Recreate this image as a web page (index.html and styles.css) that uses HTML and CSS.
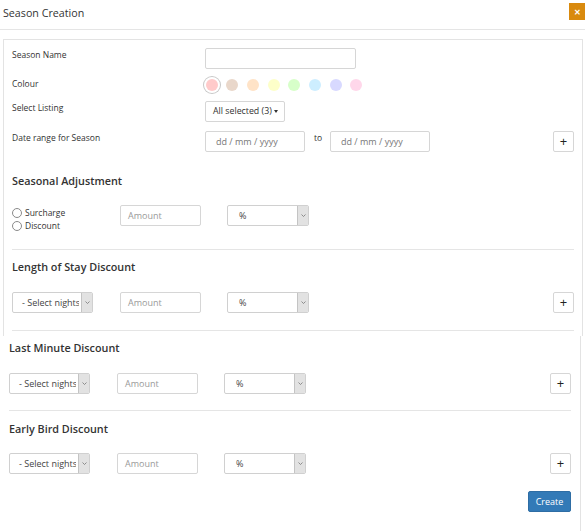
FILE: index.html
```html
<!DOCTYPE html>
<html>
<head>
<meta charset="utf-8">
<link rel="stylesheet" href="styles.css">
</head>
<body>
<div class="header">
  <div class="title">Season Creation</div>
  <div class="close">&#10005;</div>
</div>

<div class="panel panel-top">
  <div class="frow">
    <div class="flabel">Season Name</div>
    <div class="input name-input"></div>
  </div>
  <div class="frow colour-row">
    <div class="flabel">Colour</div>
    <div class="swatches">
      <span class="sw selected" style="background:#ffcaca"></span>
      <span class="sw" style="background:#e9d7ca"></span>
      <span class="sw" style="background:#ffe3c7"></span>
      <span class="sw" style="background:#fdffc9"></span>
      <span class="sw" style="background:#d7ffc9"></span>
      <span class="sw" style="background:#cdeeff"></span>
      <span class="sw" style="background:#d8d9ff"></span>
      <span class="sw" style="background:#ffd7ea"></span>
    </div>
  </div>
  <div class="frow listing-row">
    <div class="flabel">Select Listing</div>
    <div class="btn listing-btn">All selected (3) <span class="caret"></span></div>
  </div>
  <div class="frow date-row">
    <div class="flabel">Date range for Season</div>
    <div class="input date-input">dd / mm / yyyy</div>
    <div class="to">to</div>
    <div class="input date-input">dd / mm / yyyy</div>
    <div class="btn plus">+</div>
  </div>

  <div class="sec sec-first">
    <div class="heading">Seasonal Adjustment</div>
    <div class="row">
      <div class="radios">
        <div class="radio-line"><span class="radio"></span>Surcharge</div>
        <div class="radio-line"><span class="radio"></span>Discount</div>
      </div>
      <div class="input amount">Amount</div>
      <div class="select pct"><span class="sel-text">%</span><span class="sel-arrow"><svg width="5" height="3" viewBox="0 0 5 3"><path d="M0.5 0.5 L2.5 2.5 L4.5 0.5" fill="none" stroke="#777" stroke-width="0.8"/></svg></span></div>
    </div>
  </div>

  <div class="sec">
    <div class="heading">Length of Stay Discount</div>
    <div class="row">
      <div class="select nights"><span class="sel-text">- Select nights</span><span class="sel-arrow"><svg width="5" height="3" viewBox="0 0 5 3"><path d="M0.5 0.5 L2.5 2.5 L4.5 0.5" fill="none" stroke="#777" stroke-width="0.8"/></svg></span></div>
      <div class="input amount">Amount</div>
      <div class="select pct"><span class="sel-text">%</span><span class="sel-arrow"><svg width="5" height="3" viewBox="0 0 5 3"><path d="M0.5 0.5 L2.5 2.5 L4.5 0.5" fill="none" stroke="#777" stroke-width="0.8"/></svg></span></div>
      <div class="btn plus">+</div>
    </div>
  </div>
</div>

<div class="panel panel-bottom">
  <div class="sec sec-lm">
    <div class="heading">Last Minute Discount</div>
    <div class="row">
      <div class="select nights"><span class="sel-text">- Select nights</span><span class="sel-arrow"><svg width="5" height="3" viewBox="0 0 5 3"><path d="M0.5 0.5 L2.5 2.5 L4.5 0.5" fill="none" stroke="#777" stroke-width="0.8"/></svg></span></div>
      <div class="input amount">Amount</div>
      <div class="select pct"><span class="sel-text">%</span><span class="sel-arrow"><svg width="5" height="3" viewBox="0 0 5 3"><path d="M0.5 0.5 L2.5 2.5 L4.5 0.5" fill="none" stroke="#777" stroke-width="0.8"/></svg></span></div>
      <div class="btn plus">+</div>
    </div>
  </div>
  <div class="sec sec-eb">
    <div class="heading">Early Bird Discount</div>
    <div class="row">
      <div class="select nights"><span class="sel-text">- Select nights</span><span class="sel-arrow"><svg width="5" height="3" viewBox="0 0 5 3"><path d="M0.5 0.5 L2.5 2.5 L4.5 0.5" fill="none" stroke="#777" stroke-width="0.8"/></svg></span></div>
      <div class="input amount">Amount</div>
      <div class="select pct"><span class="sel-text">%</span><span class="sel-arrow"><svg width="5" height="3" viewBox="0 0 5 3"><path d="M0.5 0.5 L2.5 2.5 L4.5 0.5" fill="none" stroke="#777" stroke-width="0.8"/></svg></span></div>
      <div class="btn plus">+</div>
    </div>
  </div>
  <div class="actions">
    <div class="create">Create</div>
  </div>
</div>
</body>
</html>
```
FILE: styles.css
```css
* { box-sizing: border-box; }
html, body { margin: 0; padding: 0; background: #fff; }
body {
  font-family: "Open Sans", "Noto Sans", sans-serif;
  font-size: 8.5px;
  color: #333;
  width: 585px;
  height: 531px;
  overflow: hidden;
}
.header {
  height: 30px;
  border-bottom: 1px solid #e5e5e5;
  display: flex;
  justify-content: space-between;
  align-items: flex-start;
}
.title {
  font-size: 10.7px;
  line-height: 14px;
  padding: 6px 0 0 3px;
  color: #333;
}
.close {
  margin-top: 3px;
  width: 16px;
  height: 17px;
  background: #d98a0e;
  color: #fff;
  font-size: 8px;
  font-weight: 700;
  line-height: 17px;
  text-align: center;
}
.panel-top {
  margin: 9px 2px 0 3px;
  border: 1px solid #e3e3e3;
  border-bottom: none;
  padding: 8px 8px 5px 8px;
}
.panel-bottom {
  width: 581px;
  border-right: 1px solid #e3e3e3;
  padding: 4px 9px 20px 9px;
  height: 195px;
}
.frow {
  display: flex;
  align-items: flex-start;
  height: 21px;
  margin-bottom: 8px;
}
.colour-row { height: 16px; }
.listing-row { margin-bottom: 9px; }
.date-row { margin-bottom: 0; }
.flabel {
  width: 193px;
  line-height: 13px;
  flex: none;
}
.input {
  height: 21px;
  border: 1px solid #d6d6d6;
  border-radius: 2px;
  background: #fff;
  line-height: 19px;
  color: #777;
  flex: none;
}
.name-input { width: 151px; }
.date-input { width: 100px; padding-left: 10px; font-size: 9px; }
.to { width: 25px; padding-left: 9px; line-height: 13px; }
.swatches { display: flex; gap: 8.7px; padding-top: 2px; padding-left: 0.5px; }
.sw {
  width: 12px;
  height: 12px;
  border-radius: 50%;
  display: block;
}
.sw.selected { box-shadow: 0 0 0 2px #fff, 0 0 0 3px #c8c8c8; }
.btn {
  height: 21px;
  border: 1px solid #d6d6d6;
  border-radius: 2px;
  background: #fff;
  color: #333;
  line-height: 19px;
  flex: none;
}
.listing-btn { width: 80px; padding-left: 7px; font-size: 8.8px; white-space: nowrap; }
.caret {
  display: inline-block;
  width: 0; height: 0;
  border-left: 2.5px solid transparent;
  border-right: 2.5px solid transparent;
  border-top: 3px solid #333;
  vertical-align: 1px;
}
.plus {
  width: 21px;
  margin-left: auto;
  text-align: center;
  font-size: 13px;
  line-height: 18px;
  color: #222;
}
.sec { border-bottom: 1px solid #e5e5e5; padding: 9px 0 17px; }
.sec-first { padding-top: 21px; }
.sec-lm { padding-top: 0; padding-bottom: 16px; }
.sec-eb { padding-top: 10px; border-bottom: none; padding-bottom: 0; }
.heading {
  font-size: 10.8px;
  font-weight: 600;
  line-height: 16px;
  margin-bottom: 17px;
  color: #333;
}
.sec-first .heading { margin-bottom: 16px; }
.sec-eb .heading { margin-bottom: 16px; }
.row { display: flex; align-items: flex-start; }
.radios { width: 108px; padding-top: 1px; flex: none; }
.radio-line { line-height: 13px; display: flex; align-items: center; }
.radio {
  width: 10px; height: 10px;
  border: 1px solid #8a8a8a;
  border-radius: 50%;
  margin-right: 3px;
  background: #fff;
}
.amount { width: 81px; padding-left: 7px; color: #999; margin-right: 26px; font-size: 9px; }
.select {
  height: 21px;
  border: 1px solid #d0d0d0;
  border-radius: 2px;
  display: flex;
  background: #fff;
  overflow: hidden;
  flex: none;
}
.sel-text { flex: 1; overflow: hidden; white-space: nowrap; line-height: 19px; color: #444; font-size: 9px; }
.sel-arrow {
  width: 11px;
  flex: none;
  background: #e2e2e2;
  border-left: 1px solid #c4c4c4;
  display: flex;
  align-items: center;
  justify-content: center;
}
.nights { width: 81px; margin-right: 27px; }
.nights .sel-text { padding-left: 9px; margin-right: 2px; }
.pct { width: 82px; }
.pct .sel-text { padding-left: 11px; }
.actions { display: flex; justify-content: flex-end; margin-top: 17px; }
.create {
  width: 43px;
  height: 21px;
  background: #337ab7;
  border: 1px solid #2e6da4;
  border-radius: 2px;
  color: #fff;
  text-align: center;
  line-height: 19px;
  font-size: 9px;
}
```
